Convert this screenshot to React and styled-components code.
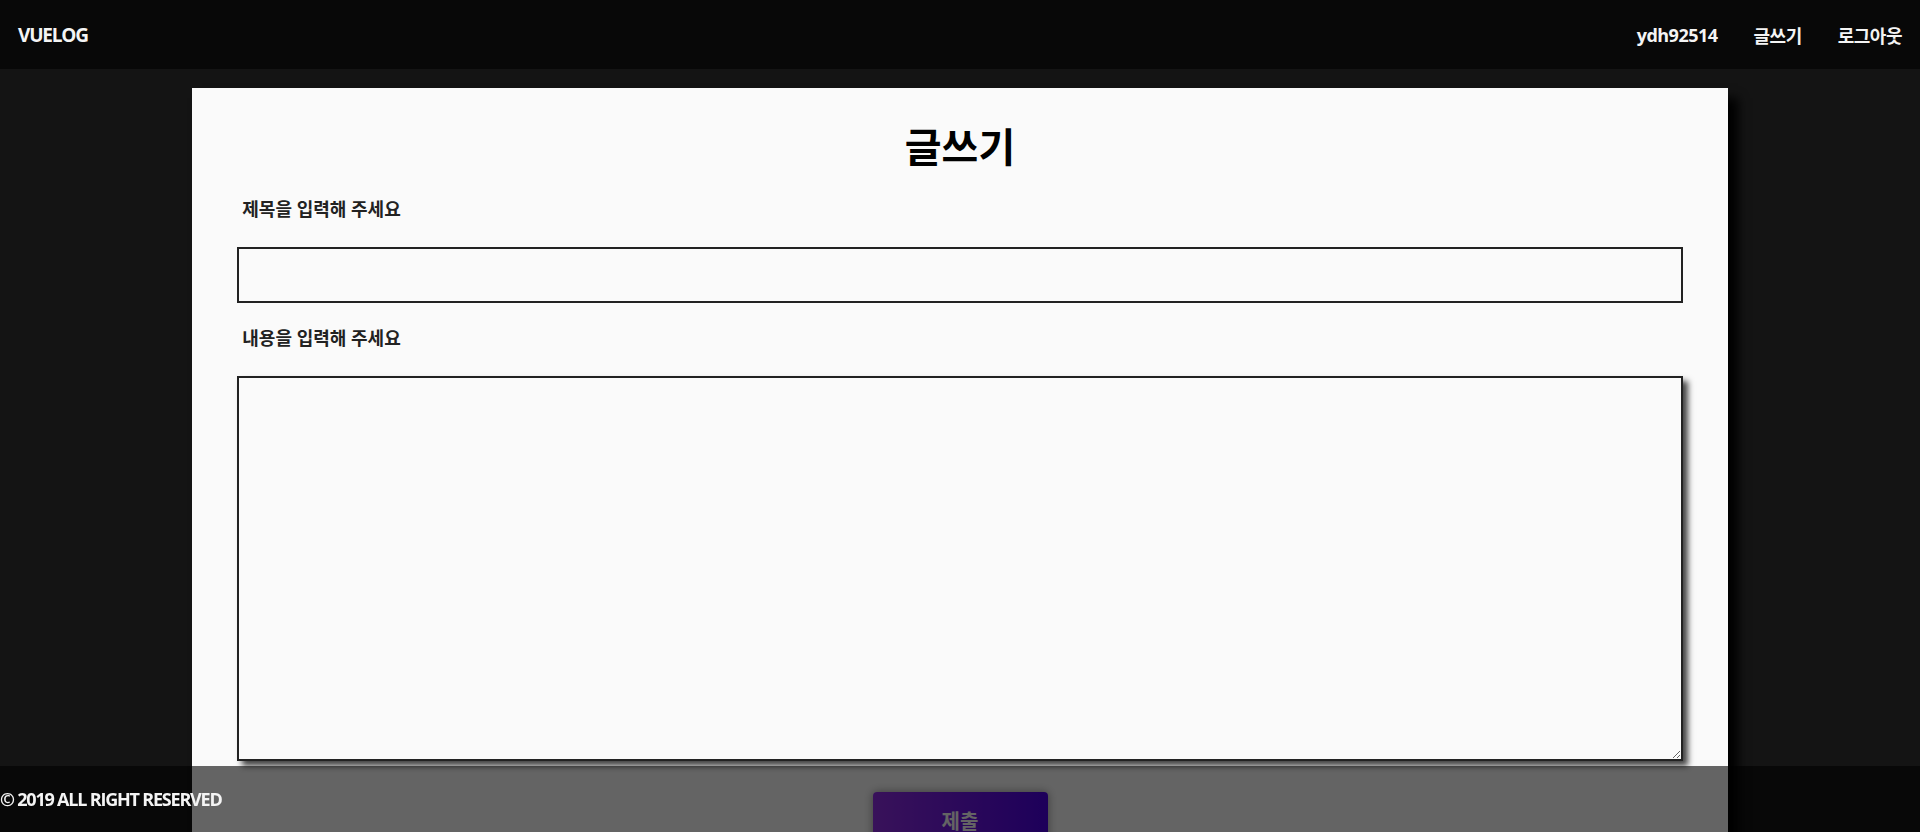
import * as React from 'react'
import styled, { createGlobalStyle } from 'styled-components'

const GlobalStyle = createGlobalStyle`
  html, body {
    margin: 0;
    padding: 0;
    overflow: hidden;
    background: #141414;
    font-family: 'Open Sans', 'Noto Sans CJK KR', sans-serif;
  }
`

const Page = styled.div`
  height: 100vh;
  overflow: hidden;
  background: #141414;
`

const Header = styled.header`
  display: flex;
  align-items: center;
  justify-content: space-between;
  height: 69px;
  padding: 0 18px;
  background: #080808;
`

const Logo = styled.div`
  color: #f4f4f4;
  font-size: 19px;
  font-weight: 700;
  letter-spacing: -1.2px;
`

const Nav = styled.nav`
  display: flex;
  align-items: center;
  gap: 36px;
`

const NavItem = styled.a`
  color: #f4f4f4;
  font-size: 18px;
  font-weight: 700;
  letter-spacing: -0.5px;
  text-decoration: none;
`

const Card = styled.main`
  width: 80%;
  margin: 19px auto 0;
  padding: 29px 0 60px;
  background: #fafafa;
  box-shadow: 10px 10px 10px #000;
`

const Title = styled.h1`
  margin: 0 0 19px;
  text-align: center;
  color: #000;
  font-size: 40px;
  font-weight: 700;
  line-height: 60px;
`

const Form = styled.form`
  display: flex;
  flex-direction: column;
  width: 94.1%;
  margin: 0 auto;
`

const Label = styled.label`
  display: block;
  margin: ${props => props.first ? '0' : '22px'} 0 24px 5px;
  color: #222;
  font-size: 18px;
  font-weight: 700;
  line-height: 27px;
`

const TitleInput = styled.input`
  box-sizing: border-box;
  height: 56px;
  border: 2px solid #222;
  background: transparent;
  outline: none;
`

const ContentArea = styled.textarea`
  box-sizing: border-box;
  height: 385px;
  border: 2px solid #222;
  background: transparent;
  outline: none;
  box-shadow: 5px 5px 6px #444;
`

const SubmitButton = styled.button`
  align-self: center;
  width: 175px;
  height: 56px;
  margin-top: 31px;
  border: none;
  border-radius: 4px;
  background: linear-gradient(to right, #8e2de2, #4a00e0);
  box-shadow: 0 0 10px rgba(0, 0, 0, 0.4);
  color: #fafafa;
  font-family: 'Open Sans', 'Noto Sans CJK KR', sans-serif;
  font-size: 20px;
  font-weight: 700;
`

const Footer = styled.footer`
  position: fixed;
  left: 0;
  right: 0;
  bottom: 0;
  display: flex;
  align-items: center;
  height: 66px;
  background: rgba(0, 0, 0, 0.6);
`

const Copyright = styled.p`
  margin: 0;
  color: #f4f4f4;
  font-size: 18px;
  font-weight: 700;
  letter-spacing: -1.2px;
`

export default function App () {
  return (
    <Page>
      <GlobalStyle />
      <Header>
        <Logo>VUELOG</Logo>
        <Nav>
          <NavItem href='#'>ydh92514</NavItem>
          <NavItem href='#'>글쓰기</NavItem>
          <NavItem href='#'>로그아웃</NavItem>
        </Nav>
      </Header>
      <Card>
        <Title>글쓰기</Title>
        <Form onSubmit={e => e.preventDefault()}>
          <Label first htmlFor='title'>제목을 입력해 주세요</Label>
          <TitleInput id='title' type='text' />
          <Label htmlFor='content'>내용을 입력해 주세요</Label>
          <ContentArea id='content' />
          <SubmitButton type='submit'>제출</SubmitButton>
        </Form>
      </Card>
      <Footer>
        <Copyright>© 2019 ALL RIGHT RESERVED</Copyright>
      </Footer>
    </Page>
  )
}
